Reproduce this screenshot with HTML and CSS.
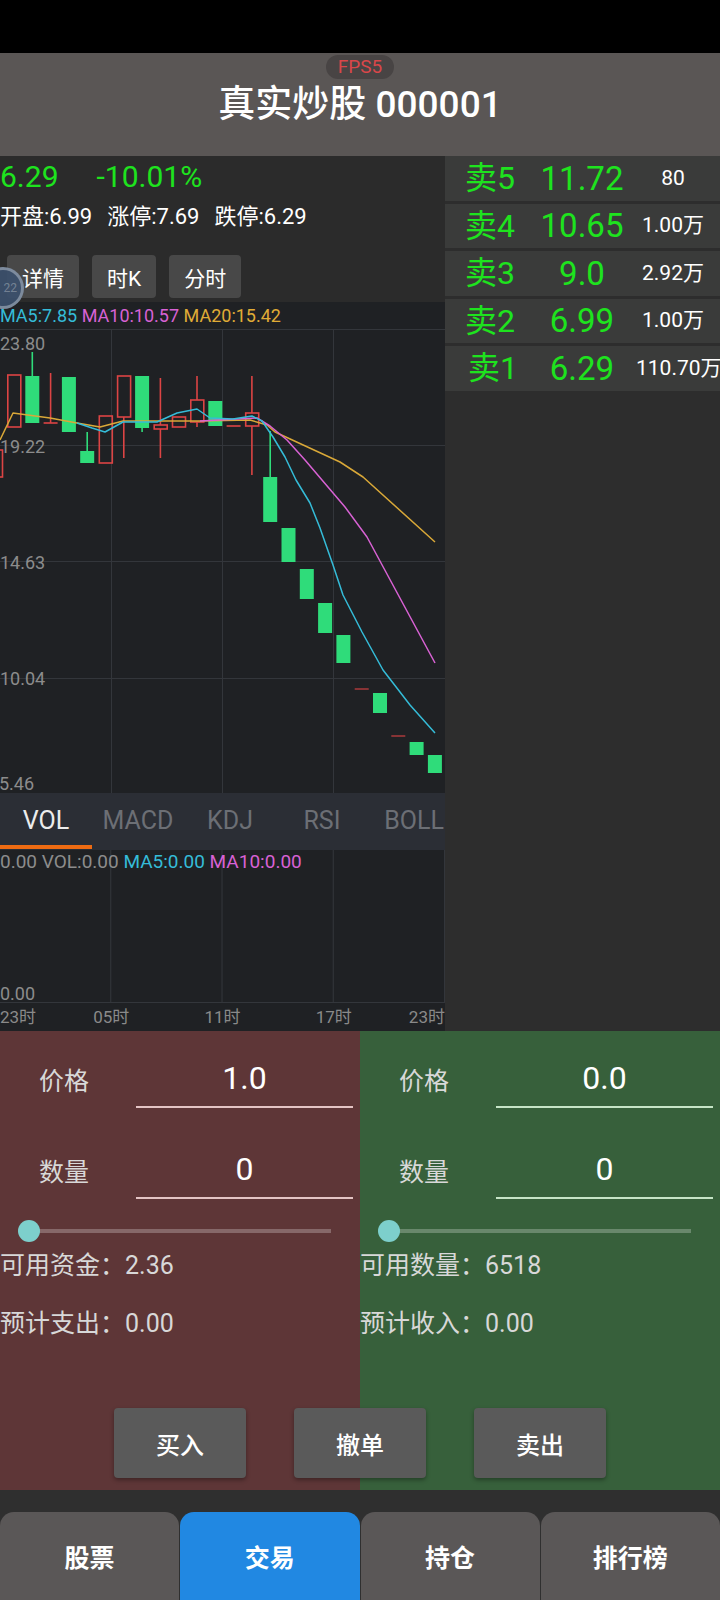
FILE: index.html
```html
<!DOCTYPE html>
<html lang="zh-CN">
<head>
    <meta charset="UTF-8">
    <meta name="viewport" content="width=device-width, initial-scale=1.0">
    <title>真实炒股</title>
    <link rel="stylesheet" href="styles.css">
</head>
<body>
    <div class="status-bar"></div>

    <header class="top-bar">
        <span class="fps">FPS5</span>
        <h1 class="title">真实炒股 000001</h1>
    </header>

    <main class="market">
        <section class="chart-col">
            <div class="quote">
                <div class="quote-main">
                    <span>6.29</span>
                    <span>-10.01%</span>
                </div>
                <div class="quote-sub">
                    <span>开盘:6.99</span>
                    <span>涨停:7.69</span>
                    <span>跌停:6.29</span>
                </div>
                <div class="modes">
                    <button class="mode-btn">详情</button>
                    <button class="mode-btn">时K</button>
                    <button class="mode-btn">分时</button>
                </div>
                <div class="float-ball">22</div>
            </div>

            <div class="ma-legend">
                <span class="ma5">MA5:7.85</span>
                <span class="ma10">MA10:10.57</span>
                <span class="ma20">MA20:15.42</span>
            </div>

            <svg class="price-chart" width="445" height="464" viewBox="0 0 445 464">
                <!-- grid -->
                <g class="grid">
                    <line x1="0" y1="0.5" x2="445" y2="0.5"/>
                    <line x1="0" y1="116.5" x2="445" y2="116.5"/>
                    <line x1="0" y1="232.5" x2="445" y2="232.5"/>
                    <line x1="0" y1="349.5" x2="445" y2="349.5"/>
                    <line x1="111.5" y1="0" x2="111.5" y2="464"/>
                    <line x1="222.5" y1="0" x2="222.5" y2="464"/>
                    <line x1="333.5" y1="0" x2="333.5" y2="464"/>
                </g>
                <g class="axis">
                    <text x="0" y="21">23.80</text>
                    <text x="0" y="124">19.22</text>
                    <text x="0" y="240">14.63</text>
                    <text x="0" y="356">10.04</text>
                    <text x="-1" y="461">5.46</text>
                </g>

                <!-- rising candles (hollow) -->
                <g class="rise">
                    <rect x="-10.5" y="121" width="13" height="27"/>
                    <rect x="7.8" y="46" width="13" height="52"/>
                    <line x1="50.6" y1="44" x2="50.6" y2="94"/>
                    <line x1="43.6" y1="94" x2="57.6" y2="94"/>
                    <rect x="99.3" y="87" width="13" height="47"/>
                    <rect x="117.6" y="47" width="13" height="41"/>
                    <line x1="123.8" y1="88" x2="123.8" y2="129"/>
                    <rect x="154.2" y="96" width="13" height="4"/>
                    <line x1="160.4" y1="49" x2="160.4" y2="96"/>
                    <line x1="160.4" y1="100" x2="160.4" y2="129"/>
                    <rect x="172.5" y="88" width="13" height="10"/>
                    <rect x="190.8" y="71" width="13" height="22"/>
                    <line x1="197" y1="47" x2="197" y2="71"/>
                    <line x1="197" y1="93" x2="197" y2="98"/>
                    <line x1="226.6" y1="97" x2="240.6" y2="97"/>
                    <rect x="245.7" y="84" width="13" height="13"/>
                    <line x1="251.9" y1="47" x2="251.9" y2="84"/>
                    <line x1="251.9" y1="97" x2="251.9" y2="146"/>
                    <line class="thin" x1="354.7" y1="360" x2="368.7" y2="360"/>
                    <line class="thin" x1="391.3" y1="407" x2="405.3" y2="407"/>
                </g>

                <!-- falling candles (filled) -->
                <g class="fall">
                    <line x1="32.3" y1="23" x2="32.3" y2="47"/>
                    <rect x="25.3" y="47" width="14" height="47"/>
                    <rect x="61.9" y="48" width="14" height="55"/>
                    <line x1="87.2" y1="103" x2="87.2" y2="122"/>
                    <rect x="80.2" y="122" width="14" height="12"/>
                    <line x1="142.1" y1="99" x2="142.1" y2="103"/>
                    <rect x="135.1" y="47" width="14" height="52"/>
                    <rect x="208.3" y="72" width="14" height="25"/>
                    <line x1="270.2" y1="102" x2="270.2" y2="148"/>
                    <rect x="263.2" y="148" width="14" height="45"/>
                    <rect x="281.5" y="199" width="14" height="34"/>
                    <rect x="299.8" y="240" width="14" height="30"/>
                    <rect x="318.1" y="274" width="14" height="30"/>
                    <rect x="336.4" y="306" width="14" height="28"/>
                    <rect x="373" y="364" width="14" height="20"/>
                    <rect x="409.6" y="413" width="14" height="13"/>
                    <rect x="427.9" y="426" width="14" height="18"/>
                </g>

                <!-- moving averages -->
                <polyline class="line-ma20" points="0,111 13,84 50,89 77,94 100,98 123,92 167,92 200,92 250,91 267,96 275,103 340,133 363,148 435,213"/>
                <polyline class="line-ma10" points="200,92 257,89 270,97 287,111 305,131 322,151 345,178 367,208 435,334"/>
                <polyline class="line-ma5" points="77,94 92,99 105,103 123,93 157,93 177,84 197,80 210,89 233,90 252,87 262,92 273,108 285,128 296,151 310,174 320,199 333,236 343,266 362,303 383,341 410,376 435,404"/>
            </svg>

            <nav class="ind-tabs">
                <span class="ind-tab active">VOL</span>
                <span class="ind-tab">MACD</span>
                <span class="ind-tab">KDJ</span>
                <span class="ind-tab">RSI</span>
                <span class="ind-tab">BOLL</span>
            </nav>

            <div class="vol-pane">
                <div class="vol-legend">
                    <span>0.00 VOL:0.00</span>
                    <span class="ma5">MA5:0.00</span>
                    <span class="ma10">MA10:0.00</span>
                </div>
                <div class="vol-min">0.00</div>
            </div>

            <div class="time-axis">
                <span>23时</span>
                <span>05时</span>
                <span>11时</span>
                <span>17时</span>
                <span>23时</span>
            </div>
        </section>

        <aside class="book">
            <div class="book-row"><span class="lvl">卖5</span><span class="px">11.72</span><span class="qty">80</span></div>
            <div class="book-row"><span class="lvl">卖4</span><span class="px">10.65</span><span class="qty">1.00万</span></div>
            <div class="book-row"><span class="lvl">卖3</span><span class="px">9.0</span><span class="qty">2.92万</span></div>
            <div class="book-row"><span class="lvl">卖2</span><span class="px">6.99</span><span class="qty">1.00万</span></div>
            <div class="book-row"><span class="lvl lvl-1">卖1</span><span class="px">6.29</span><span class="qty">110.70万</span></div>
        </aside>
    </main>

    <section class="trade">
        <div class="trade-forms">
            <div class="trade-side buy">
                <div class="field">
                    <span class="field-label">价格</span>
                    <span class="field-value">1.0</span>
                </div>
                <div class="field">
                    <span class="field-label">数量</span>
                    <span class="field-value">0</span>
                </div>
                <div class="slider"><span class="thumb"></span></div>
                <div class="info">可用资金：2.36</div>
                <div class="info">预计支出：0.00</div>
            </div>
            <div class="trade-side sell">
                <div class="field">
                    <span class="field-label">价格</span>
                    <span class="field-value">0.0</span>
                </div>
                <div class="field">
                    <span class="field-label">数量</span>
                    <span class="field-value">0</span>
                </div>
                <div class="slider"><span class="thumb"></span></div>
                <div class="info">可用数量：6518</div>
                <div class="info">预计收入：0.00</div>
            </div>
        </div>
        <div class="actions">
            <button class="action-btn">买入</button>
            <button class="action-btn">撤单</button>
            <button class="action-btn">卖出</button>
        </div>
    </section>

    <nav class="tab-bar">
        <span class="tab">股票</span>
        <span class="tab active">交易</span>
        <span class="tab">持仓</span>
        <span class="tab">排行榜</span>
    </nav>
</body>
</html>
```

FILE: styles.css
```css
* {
    box-sizing: border-box;
}
body {
    margin: 0;
    width: 720px;
    height: 1600px;
    overflow: hidden;
    background: #2f2f2f;
    color: #fff;
    font-family: Roboto, "Noto Sans CJK SC", sans-serif;
}
.status-bar {
    height: 53px;
    background: #000;
}
.top-bar {
    height: 103px;
    background: #5a5655;
    display: flex;
    flex-direction: column;
    align-items: center;
}
.fps {
    margin-top: 2px;
    height: 24px;
    padding: 0 12px;
    border-radius: 12px;
    background: #484444;
    color: #d9474a;
    font-size: 19px;
    line-height: 24px;
}
.title {
    margin: 0;
    font-size: 37px;
    font-weight: 500;
    line-height: 52px;
}

/* market area */
.market {
    display: flex;
    height: 875px;
}
.chart-col {
    width: 445px;
    display: flex;
    flex-direction: column;
    background: #1f2124;
}
.quote {
    position: relative;
    height: 146px;
    background: #2b2b2b;
}
.quote-main {
    display: flex;
    gap: 38px;
    height: 40px;
    align-items: center;
    font-size: 30px;
    color: #1ee31e;
}
.quote-sub {
    display: flex;
    gap: 15px;
    height: 36px;
    align-items: center;
    font-size: 22px;
}
.modes {
    display: flex;
    gap: 13px;
    margin: 23px 0 0 7px;
}
.mode-btn {
    height: 43px;
    padding: 0 15px;
    border: none;
    border-radius: 4px;
    background: #484848;
    color: #fff;
    font-family: inherit;
    font-size: 21px;
}
.float-ball {
    position: absolute;
    left: -18px;
    top: 111px;
    width: 42px;
    height: 42px;
    border-radius: 50%;
    border: 3px solid rgba(160, 170, 185, 0.65);
    background: rgba(60, 80, 108, 0.92);
    color: rgba(255, 255, 255, 0.3);
    font-size: 12px;
    line-height: 36px;
    text-align: right;
    padding-right: 4px;
}
.ma-legend {
    height: 27px;
    line-height: 27px;
    font-size: 18px;
    white-space: nowrap;
}
.ma5 {
    color: #35bcd8;
}
.ma10 {
    color: #d862d4;
}
.ma20 {
    color: #e0ac36;
}
.price-chart {
    display: block;
}
.grid line {
    stroke: #33363b;
    stroke-width: 1;
}
.axis text {
    fill: #8c8c8c;
    font-size: 18px;
    font-family: Roboto, sans-serif;
}
.rise rect,
.rise line {
    fill: none;
    stroke: #dc4444;
    stroke-width: 1.6;
}
.rise .thin {
    stroke-width: 1.1;
}
.fall rect {
    fill: #2fdc7a;
}
.fall line {
    stroke: #2fdc7a;
    stroke-width: 1.6;
}
.line-ma5,
.line-ma10,
.line-ma20 {
    fill: none;
    stroke-width: 1.5;
    stroke-linejoin: round;
}
.line-ma5 {
    stroke: #35bcd8;
}
.line-ma10 {
    stroke: #d862d4;
}
.line-ma20 {
    stroke: #d9a838;
}

.ind-tabs {
    height: 57px;
    display: flex;
    overflow: hidden;
    background: #2b2e35;
}
.ind-tab {
    flex: 0 0 92px;
    text-align: center;
    font-size: 25px;
    line-height: 56px;
    color: #6c6f75;
}
.ind-tab.active {
    color: #ececec;
    box-shadow: inset 0 -5px 0 -1px #ee6b12;
    border-bottom: 1px solid #2b2e35;
}
.vol-pane {
    height: 153px;
    display: flex;
    flex-direction: column;
    justify-content: space-between;
    border-bottom: 1px solid #33363b;
    background-image: linear-gradient(90deg, transparent 110.75px, #33363b 110.75px, #33363b 111.75px, transparent 111.75px);
    background-size: 111.25px 100%;
}
.vol-legend {
    font-size: 19px;
    line-height: 24px;
    color: #8c8c8c;
    white-space: nowrap;
}
.vol-min {
    font-size: 18px;
    line-height: 16px;
    color: #8c8c8c;
}
.time-axis {
    height: 28px;
    display: grid;
    grid-template-columns: 55.6px repeat(3, 111.25px) 55.6px;
    font-size: 17px;
    line-height: 28px;
    color: #8a8a8a;
    white-space: nowrap;
}
.time-axis span {
    text-align: center;
}
.time-axis span:first-child {
    text-align: left;
}
.time-axis span:last-child {
    text-align: right;
}

/* order book */
.book {
    flex: 1;
    display: flex;
    flex-direction: column;
    gap: 3px;
    background: #2d2d2d;
}
.book-row {
    height: 44.5px;
    display: grid;
    grid-template-columns: 83px 108px 74px;
    align-items: center;
    background: #3a3b3a;
    line-height: 1;
    white-space: nowrap;
}
.lvl {
    padding-left: 20px;
    font-size: 32px;
    color: #1ee31e;
}
.lvl-1 {
    padding-left: 23px;
}
.px {
    text-align: center;
    font-size: 33px;
    color: #1ee31e;
}
.qty {
    text-align: center;
    font-size: 21px;
    color: #fff;
}

/* trade panel */
.trade {
    height: 459px;
    display: flex;
    flex-direction: column;
    background: linear-gradient(to right, #5e3637 50%, #37603b 50%);
}
.trade-forms {
    display: grid;
    grid-template-columns: 1fr 1fr;
}
.trade-side {
    padding-top: 18px;
}
.field {
    display: grid;
    grid-template-columns: 136px 217px;
    height: 59px;
    align-items: center;
}
.field + .field {
    margin-top: 32px;
}
.field-label {
    padding-left: 39px;
    font-size: 25px;
    color: #d8d8d8;
}
.field-value {
    height: 100%;
    display: flex;
    align-items: center;
    justify-content: center;
    font-size: 32px;
    border-bottom: 2px solid #e4c4c4;
}
.sell .field-value {
    border-bottom-color: #c6e4c6;
}
.slider {
    margin: 21px 0 0 18px;
    width: 313px;
    height: 22px;
    background: linear-gradient(rgba(255, 255, 255, 0.25), rgba(255, 255, 255, 0.25)) 11px 9px / 302px 4px no-repeat;
}
.thumb {
    display: block;
    width: 22px;
    height: 22px;
    border-radius: 50%;
    background: #7dcfcc;
}
.info {
    margin-top: 4px;
    font-size: 25px;
    line-height: 40px;
    color: #d8d8d8;
}
.info + .info {
    margin-top: 18px;
}
.actions {
    margin-top: auto;
    margin-bottom: 12px;
    display: flex;
    justify-content: center;
    gap: 48px;
}
.action-btn {
    width: 132px;
    height: 70px;
    border: none;
    border-radius: 4px;
    background: #5a5a5a;
    color: #fff;
    font-family: inherit;
    font-size: 24px;
    font-weight: 500;
    box-shadow: 0 2px 4px rgba(0, 0, 0, 0.35);
}

/* bottom tabs */
.tab-bar {
    height: 110px;
    padding-top: 22px;
    display: grid;
    grid-template-columns: repeat(4, 1fr);
    gap: 1px;
    background: #2f2f2f;
}
.tab {
    display: flex;
    align-items: center;
    justify-content: center;
    border-radius: 14px 14px 0 0;
    background: #5a5757;
    font-size: 25px;
    font-weight: 700;
}
.tab.active {
    background: #2188e2;
}
```
